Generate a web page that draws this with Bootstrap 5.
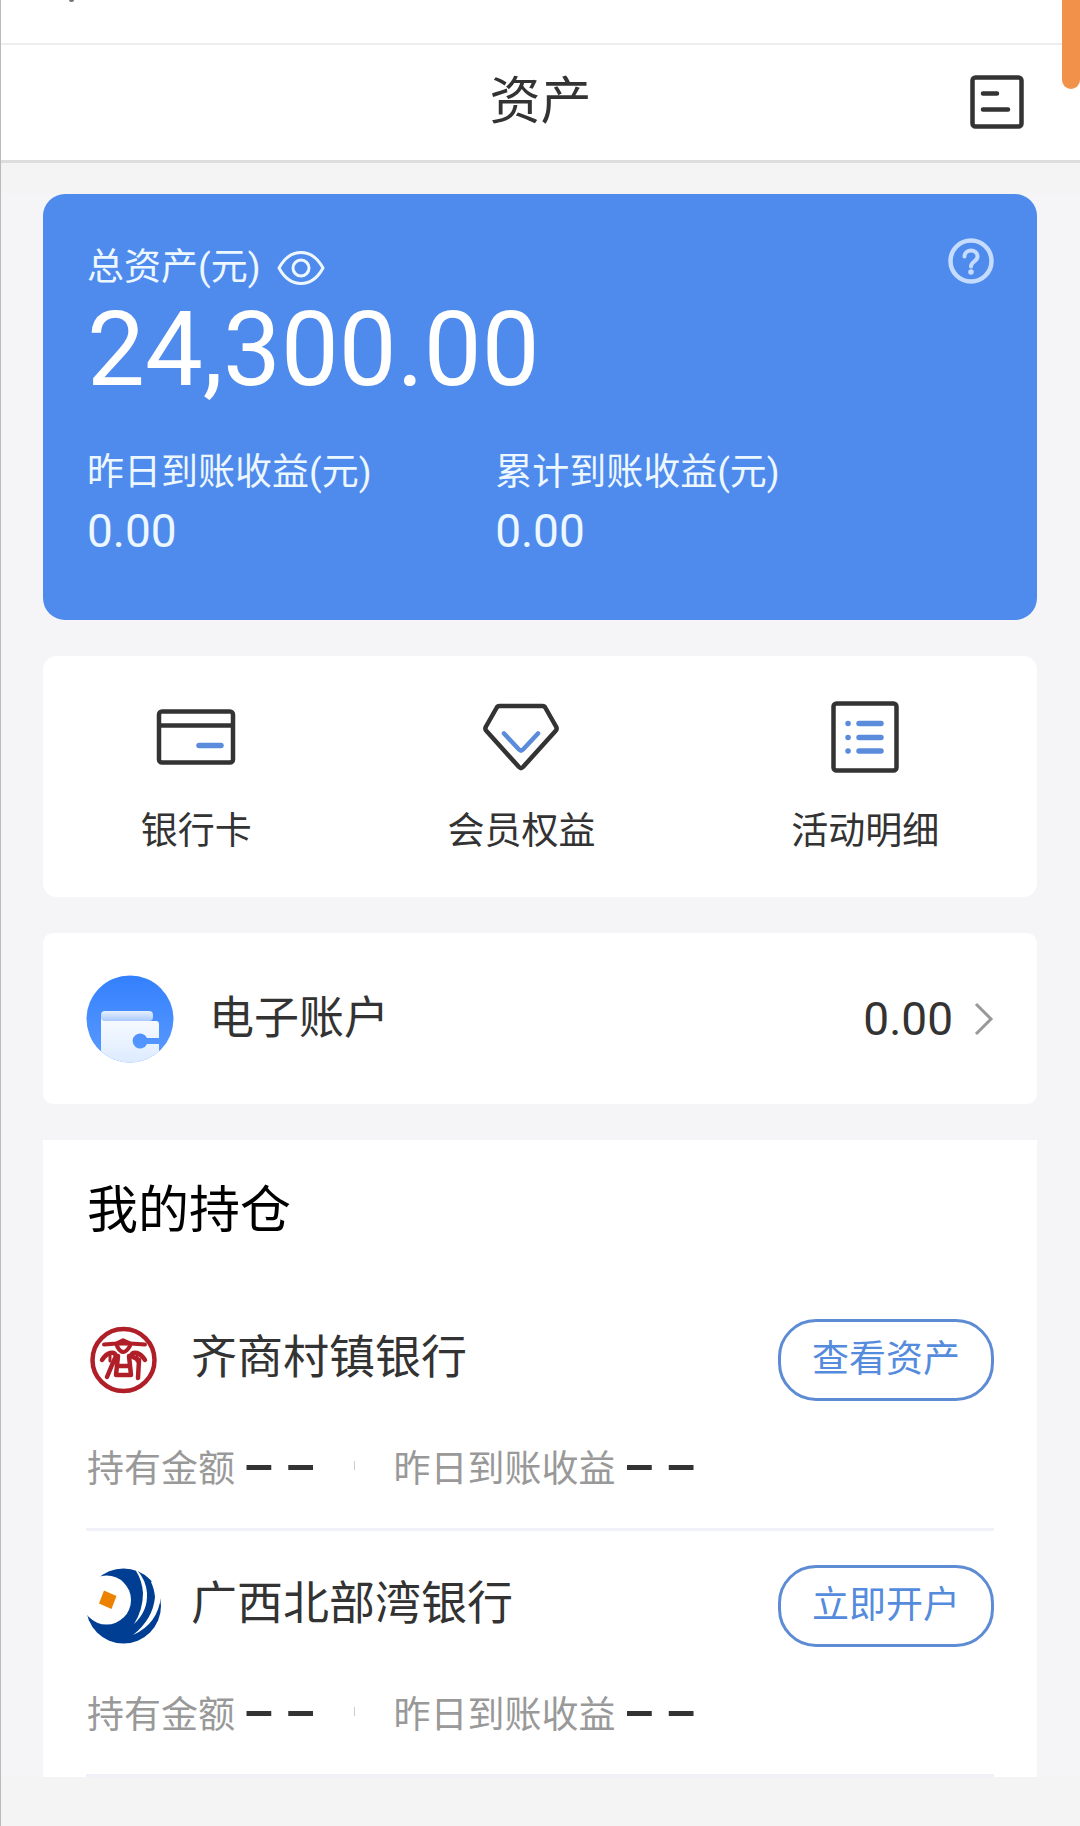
<!DOCTYPE html>
<html lang="zh-CN">
<head>
<meta charset="utf-8">
<meta name="viewport" content="width=device-width, initial-scale=1">
<title>资产</title>
<link href="https://cdn.jsdelivr.net/npm/bootstrap@5.3.0/dist/css/bootstrap.min.css" rel="stylesheet">
<style>
  body { font-family: Roboto, "Noto Sans CJK SC", sans-serif; background: #f4f4f4; color: #333; font-size: 37px; line-height: 56px; }
  svg { display: block; flex: none; }
  a { color: inherit; text-decoration: none; }
  .app { border-left: 1px solid #bbb; }
  .status-strip { height: 45px; border-bottom: 2px solid #eee; padding-left: 68px; }
  .status-mark { width: 5px; height: 2px; background: #777; border-radius: 0 0 2px 2px; }
  .title-bar { height: 118px; padding: 0 56px 2px; border-bottom: 3px solid #ddd; display: grid; grid-template-columns: 1fr auto 1fr; align-items: center; }
  .title-bar h1 { font-size: 51px; line-height: 64px; }
  .scroll-thumb { width: 18px; height: 89px; background: #f2924a; border-radius: 0 0 9px 9px; }
  .content { margin-top: 31px; padding: 0 43px 0 42px; background: #f5f5f8; gap: 36px; }
  .panel { background: #fff; }
  .total { background: #4f8bed; color: #fff; border-radius: 22px; padding: 44px 43px 59px 44px; }
  .total-label { line-height: 60px; }
  .amount { font-size: 103px; line-height: 116px; margin-top: -6px; }
  .value { font-size: 46px; line-height: 60px; }
  .yields { margin-top: 37px; }
  .yields > div { width: 45%; }
  .soft { color: #edf7ff; }
  .actions { border-radius: 14px; padding: 41px 0 37px; }
  .action-link { gap: 27px; }
  .account { border-radius: 10px; padding: 42px 43px 41px; }
  .account-name { font-size: 45px; line-height: 60px; margin-left: 35px; }
  .holdings { padding: 0 43px; }
  .holdings h2 { font-size: 51px; line-height: 64px; padding: 39px 0 42px; margin: 0 1px; color: #000; }
  .holding { border-bottom: 3px solid #f0f1f9; padding: 34px 0 30px; }
  .bank-logo { width: 75px; height: 82px; }
  .bank-name { font-size: 46px; line-height: 76px; margin-left: 30px; }
  .pill { width: 216px; height: 82px; border: 3px solid #5d8cd4; border-radius: 38px; background: #fff; color: #558bdd; padding: 0; }
  .figures { margin-top: 41px; padding-left: 1px; color: #999; }
  .dashes { font: bold 50px/44px "Liberation Sans", sans-serif; color: #333; margin-left: 10px; padding-bottom: 12px; }
  .tick { width: 1px; height: 9px; background: #ccc; margin: 0 39px 10px; }
</style>
<script src="https://cdn.jsdelivr.net/npm/bootstrap@5.3.0/dist/js/bootstrap.bundle.min.js"></script>
</head>
<body>
<div class="app min-vh-100 position-relative">
  <header class="bg-white">
    <div class="status-strip"><div class="status-mark"></div></div>
    <div class="title-bar">
      <span></span>
      <h1 class="m-0 fw-normal">资产</h1>
      <button type="button" class="btn p-0 border-0 ms-auto" aria-label="账单">
        <svg width="54" height="54" viewBox="0 0 54 54" fill="none" stroke="#333" stroke-width="4.500" stroke-linecap="round"><rect x="2.500" y="2.500" width="49" height="49" rx="3"/><path d="M13 18.500h14M13 34.500h25"/></svg>
      </button>
    </div>
  </header>
  <div class="scroll-thumb position-absolute top-0 end-0"></div>

  <main class="content d-flex flex-column">
    <section class="total">
      <div class="d-flex justify-content-between align-items-start">
        <div class="d-flex align-items-center soft">
          <span class="total-label">总资产(元)</span>
          <button type="button" class="btn p-0 border-0 ms-3" aria-label="显示金额">
            <svg width="48" height="36" viewBox="0 0 48 36" fill="none" stroke="#edf7ff" stroke-width="3"><path d="M2 18C8 7 15 2.500 24 2.500S40 7 46 18C40 29 33 33.500 24 33.500S8 29 2 18Z" stroke-linejoin="round"/><circle cx="24" cy="18" r="8"/></svg>
          </button>
        </div>
        <button type="button" class="btn p-0 border-0" aria-label="帮助">
          <svg width="46" height="46" viewBox="0 0 46 46" fill="none" stroke="#c5dcff" stroke-linecap="round"><circle cx="23" cy="23" r="20.500" stroke-width="4.500"/><path d="M16.500 18.500c0-8 13-8 13 0 0 5-6.500 5-6.500 10" stroke-width="4"/><circle cx="23" cy="34" r="2.800" fill="#c5dcff" stroke="none"/></svg>
        </button>
      </div>
      <div class="amount">24,300.00</div>
      <div class="yields d-flex soft">
        <div><div>昨日到账收益(元)</div><div class="value">0.00</div></div>
        <div><div>累计到账收益(元)</div><div class="value">0.00</div></div>
      </div>
    </section>

    <nav class="actions panel d-flex justify-content-around">
      <a href="#" class="action-link d-flex flex-column align-items-center">
        <svg width="80" height="80" viewBox="0 0 80 80" fill="none" stroke="#333" stroke-width="4.500"><rect x="3" y="14.500" width="74" height="51" rx="3"/><path d="M3 28.500h74"/><path d="M43 48.500h22" stroke="#5b8cdb" stroke-width="5.500" stroke-linecap="round"/></svg>
        <span>银行卡</span>
      </a>
      <a href="#" class="action-link d-flex flex-column align-items-center">
        <svg width="80" height="80" viewBox="0 0 80 80" fill="none" stroke="#333" stroke-width="4.500" stroke-linejoin="round" stroke-linecap="round"><path d="M18.500 9h43q2 0 3 2L75 29.500q1.500 2.500-.5 4.500L42 70q-2 2-4 0L5.500 34q-2-2-.5-4.500L15.500 11q1-2 3-2Z"/><path d="M23 36.500 38 52.500q2 2 4 0L57 36.500" stroke="#5b8cdb"/></svg>
        <span>会员权益</span>
      </a>
      <a href="#" class="action-link d-flex flex-column align-items-center">
        <svg width="80" height="80" viewBox="0 0 80 80" fill="none" stroke="#333" stroke-width="4.500"><rect x="8.500" y="6.500" width="63" height="67" rx="3"/><path d="M34 26.500h22M34 40.500h22M34 54h22M23 26.500h.1M23 40.500h.1M23 54h.1" stroke="#5b8cdb" stroke-width="5.500" stroke-linecap="round"/></svg>
        <span>活动明细</span>
      </a>
    </nav>

    <a href="#" class="account panel d-flex align-items-center">
      <svg width="88" height="88" viewBox="0 0 88 88">
        <defs>
          <linearGradient id="sky" x2="0" y2="1"><stop stop-color="#3380fd"/><stop offset="1" stop-color="#5c9bff"/></linearGradient>
          <linearGradient id="flap" x2="0" y2="1"><stop stop-color="#e7f0ff"/><stop offset="1" stop-color="#a9caff"/></linearGradient>
          <linearGradient id="body" x2="0" y2="1"><stop stop-color="#fafcff"/><stop offset="1" stop-color="#dceaff"/></linearGradient>
          <clipPath id="disc"><circle cx="44" cy="44" r="43.500"/></clipPath>
        </defs>
        <g clip-path="url(#disc)"><path fill="url(#sky)" d="M0 0h88v88H0z"/><path fill="url(#body)" d="M15 40q0 6 6 6h49q3 0 3 3v14H61a7.500 7.500 0 1 0 0 6h12v20H15Z"/><rect x="15" y="36" width="52" height="10" rx="4" fill="url(#flap)"/></g>
      </svg>
      <span class="account-name">电子账户</span>
      <span class="value ms-auto">0.00</span>
      <svg class="ms-3" width="25" height="40" viewBox="0 0 25 40" fill="none" stroke="#999" stroke-width="3"><path d="M7 5 22 20 7 35"/></svg>
    </a>

    <section class="holdings panel">
      <h2 class="fw-normal">我的持仓</h2>
      <article class="holding">
        <div class="d-flex align-items-start">
          <svg class="bank-logo" viewBox="0 0 75 82" fill="none" stroke="#b01f28" stroke-linecap="round" stroke-linejoin="round">
            <circle cx="37.500" cy="41" r="31" stroke-width="4.500"/>
            <path d="M18 25.500q19-2 41 0" stroke-width="4"/><path d="M29 24l8-4 9 4Z" fill="#b01f28" stroke-width="1.500"/>
            <path d="M31 27q6 12 13 0" stroke-width="4"/><path d="M16 41q4-6 8-7 5-1 6 3l-4 9-5 12M59 41q-4-6-8-7-5-1-6 3l8 4-1 18" stroke-width="4.500"/>
            <path d="M24 36v6M51 36v6" stroke-width="3"/><path d="M32 37l-2 19h15l-2-19M31 47h13" stroke-width="4.500"/>
          </svg>
          <span class="bank-name">齐商村镇银行</span>
          <button type="button" class="pill ms-auto">查看资产</button>
        </div>
        <div class="figures d-flex align-items-center"><span>持有金额</span><span class="dashes">– –</span><span class="tick"></span><span>昨日到账收益</span><span class="dashes">– –</span></div>
      </article>
      <article class="holding">
        <div class="d-flex align-items-start">
          <svg class="bank-logo" viewBox="0 0 75 82">
            <circle cx="37.500" cy="41" r="37.500" fill="#003e93"/>
            <circle cx="20.500" cy="35" r="24.500" fill="#fff"/>
            <path d="M0 37V8h15Q10 13 6 20L0 38Z" fill="#fff"/>
            <path d="M51 5q9 10 10 23 1 18-13 31 9-14 9-31-1-13-7-22ZM75 12v19q-3 28-28 39 20-16 22-38-1-9-4-15Z" fill="#fff"/>
            <path d="M18 25.500 30.500 31 25.500 44 13 38.500Z" fill="#ec8200"/>
          </svg>
          <span class="bank-name">广西北部湾银行</span>
          <button type="button" class="pill ms-auto">立即开户</button>
        </div>
        <div class="figures d-flex align-items-center"><span>持有金额</span><span class="dashes">– –</span><span class="tick"></span><span>昨日到账收益</span><span class="dashes">– –</span></div>
      </article>
    </section>
  </main>
</div>
</body>
</html>
